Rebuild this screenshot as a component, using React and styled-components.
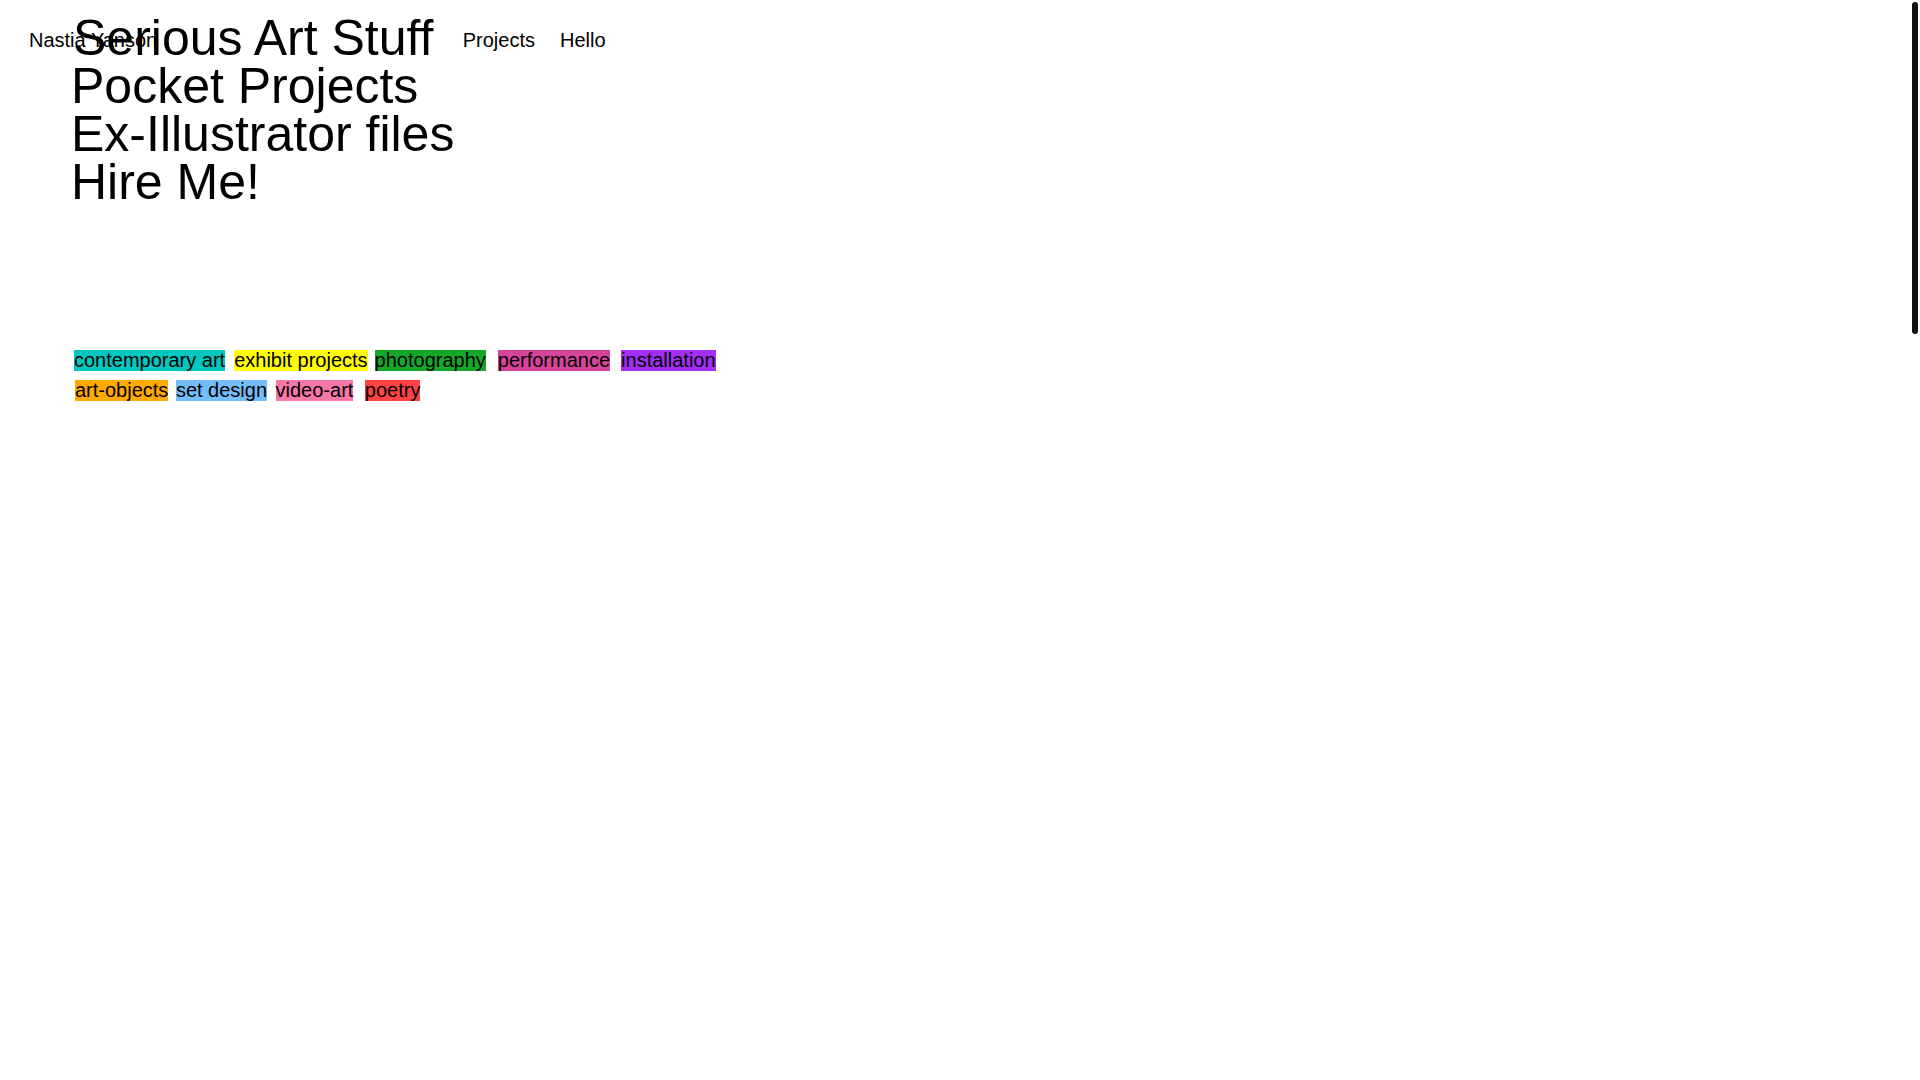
import React from 'react';
import styled, { createGlobalStyle } from 'styled-components';

const GlobalStyle = createGlobalStyle`
  html, body {
    margin: 0;
    padding: 0;
    background: #ffffff;
  }
  body {
    font-family: "Liberation Sans", Arial, Helvetica, sans-serif;
    color: #000000;
  }
`;

const Page = styled.div`
  position: relative;
  min-height: 3470px;
`;

const ScrollThumb = styled.div`
  position: fixed;
  top: 2px;
  right: 2px;
  width: 6px;
  height: 332px;
  border-radius: 3px;
  background: #111111;
  z-index: 10;
`;

const Header = styled.header`
  display: flex;
  align-items: baseline;
  padding: 28px 0 0 29px;
  font-size: 20px;
  line-height: 24px;
`;

const Brand = styled.a`
  color: #000;
  text-decoration: none;
  white-space: nowrap;
`;

const NavLinks = styled.nav`
  display: flex;
  gap: 25px;
  margin-left: 305.5px;
`;

const NavLink = styled.a`
  color: #000;
  text-decoration: none;
`;

const Menu = styled.ul`
  position: absolute;
  top: 14px;
  left: 71px;
  margin: 0;
  padding: 0;
  list-style: none;
  font-size: 50px;
  line-height: 48px;
`;

const MenuItem = styled.li`
  padding-left: ${(p) => p.$indent || 0}px;
  white-space: nowrap;
`;

const Tags = styled.section`
  display: flex;
  flex-direction: column;
  gap: 9px;
  margin-top: 298px;
  padding-left: 74px;
`;

const TagRow = styled.div`
  display: flex;
  margin-left: ${(p) => p.$offset || 0}px;
`;

const Tag = styled.a`
  display: block;
  height: 21px;
  line-height: 21px;
  font-size: 20px;
  white-space: nowrap;
  color: #000;
  text-decoration: none;
  background: ${(p) => p.$color};
  margin-left: ${(p) => p.$gap || 0}px;
`;

const menu = [
  { label: 'Serious Art Stuff', indent: 2 },
  { label: 'Pocket Projects', indent: 0 },
  { label: 'Ex-Illustrator files', indent: 0 },
  { label: 'Hire Me!', indent: 0 },
];

const tagRows = [
  {
    offset: 0,
    tags: [
      { label: 'contemporary art', color: '#00c8be', gap: 0 },
      { label: 'exhibit projects', color: '#ffff00', gap: 9 },
      { label: 'photography', color: '#14a82b', gap: 7 },
      { label: 'performance', color: '#d6449a', gap: 12 },
      { label: 'installation', color: '#a22ff6', gap: 11 },
    ],
  },
  {
    offset: 1,
    tags: [
      { label: 'art-objects', color: '#ffaa00', gap: 0 },
      { label: 'set design', color: '#73bdfa', gap: 7.5 },
      { label: 'video-art', color: '#f677a8', gap: 8.5 },
      { label: 'poetry', color: '#ff4242', gap: 11.5 },
    ],
  },
];

export default function App() {
  return (
    <>
      <GlobalStyle />
      <Page>
        <Header>
          <Brand href="#">Nastia Yanson</Brand>
          <NavLinks>
            <NavLink href="#">Projects</NavLink>
            <NavLink href="#">Hello</NavLink>
          </NavLinks>
        </Header>
        <Menu>
          {menu.map((m) => (
            <MenuItem key={m.label} $indent={m.indent}>
              {m.label}
            </MenuItem>
          ))}
        </Menu>
        <Tags>
          {tagRows.map((row, i) => (
            <TagRow key={i} $offset={row.offset}>
              {row.tags.map((t) => (
                <Tag key={t.label} href="#" $color={t.color} $gap={t.gap}>
                  {t.label}
                </Tag>
              ))}
            </TagRow>
          ))}
        </Tags>
      </Page>
      <ScrollThumb />
    </>
  );
}
